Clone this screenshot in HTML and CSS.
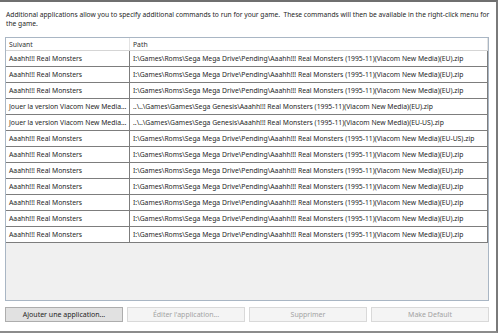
FILE: index.html
```html
<!DOCTYPE html>
<html lang="fr">
  <head>
    <meta charset="UTF-8" />
    <title>Additional Applications</title>
    <link rel="stylesheet" href="styles.css">
  </head>
  <body>
    <div class="window">
      <p class="intro">Additional applications allow you to specify additional commands to run for your game.&nbsp; These commands will then be available in the right-click menu for the game.</p>

      <div class="grid">
        <table class="apps">
          <thead>
            <tr>
              <th class="col-name">Suivant</th>
              <th>Path</th>
            </tr>
          </thead>
          <tbody>
            <tr><td>Aaahh!!! Real Monsters</td><td>I:\Games\Roms\Sega Mega Drive\Pending\Aaahh!!! Real Monsters (1995-11)(Viacom New Media)(EU).zip</td></tr>
            <tr><td>Aaahh!!! Real Monsters</td><td>I:\Games\Roms\Sega Mega Drive\Pending\Aaahh!!! Real Monsters (1995-11)(Viacom New Media)(EU).zip</td></tr>
            <tr><td>Aaahh!!! Real Monsters</td><td>I:\Games\Roms\Sega Mega Drive\Pending\Aaahh!!! Real Monsters (1995-11)(Viacom New Media)(EU).zip</td></tr>
            <tr><td>Jouer la version Viacom New Media...</td><td>..\..\Games\Games\Sega Genesis\Aaahh!!! Real Monsters (1995-11)(Viacom New Media)(EU).zip</td></tr>
            <tr><td>Jouer la version Viacom New Media...</td><td>..\..\Games\Games\Sega Genesis\Aaahh!!! Real Monsters (1995-11)(Viacom New Media)(EU-US).zip</td></tr>
            <tr><td>Aaahh!!! Real Monsters</td><td>I:\Games\Roms\Sega Mega Drive\Pending\Aaahh!!! Real Monsters (1995-11)(Viacom New Media)(EU-US).zip</td></tr>
            <tr><td>Aaahh!!! Real Monsters</td><td>I:\Games\Roms\Sega Mega Drive\Pending\Aaahh!!! Real Monsters (1995-11)(Viacom New Media)(EU).zip</td></tr>
            <tr><td>Aaahh!!! Real Monsters</td><td>I:\Games\Roms\Sega Mega Drive\Pending\Aaahh!!! Real Monsters (1995-11)(Viacom New Media)(EU).zip</td></tr>
            <tr><td>Aaahh!!! Real Monsters</td><td>I:\Games\Roms\Sega Mega Drive\Pending\Aaahh!!! Real Monsters (1995-11)(Viacom New Media)(EU).zip</td></tr>
            <tr><td>Aaahh!!! Real Monsters</td><td>I:\Games\Roms\Sega Mega Drive\Pending\Aaahh!!! Real Monsters (1995-11)(Viacom New Media)(EU).zip</td></tr>
            <tr><td>Aaahh!!! Real Monsters</td><td>I:\Games\Roms\Sega Mega Drive\Pending\Aaahh!!! Real Monsters (1995-11)(Viacom New Media)(EU).zip</td></tr>
            <tr><td>Aaahh!!! Real Monsters</td><td>I:\Games\Roms\Sega Mega Drive\Pending\Aaahh!!! Real Monsters (1995-11)(Viacom New Media)(EU).zip</td></tr>
          </tbody>
        </table>
      </div>

      <div class="actions">
        <button class="btn">Ajouter une application...</button>
        <button class="btn" disabled>Éditer l'application...</button>
        <button class="btn" disabled>Supprimer</button>
        <button class="btn" disabled>Make Default</button>
      </div>
    </div>
  </body>
</html>
```

FILE: styles.css
```css
body {
  margin: 0;
  background: #ffffff;
  font-family: "Noto Sans", "Open Sans", sans-serif;
  color: #1e1e1e;
}

.window {
  width: 498px;
  height: 333px;
  box-sizing: border-box;
  border-top: 2px solid #6f6f6f;
  border-right: 2px solid #7a7a7a;
  border-bottom: 2px solid #8c8c8c;
  padding: 8px 7px 0 5px;
  display: flex;
  flex-direction: column;
}

.intro {
  margin: 0 -2px 0 1px;
  font-size: 6.7px;
  line-height: 9px;
  color: #262626;
}

.grid {
  margin-top: 9px;
  height: 264px;
  box-sizing: border-box;
  border: 1px solid #a9b6c4;
  background: #f0f0f0;
}

.apps {
  width: 100%;
  border-collapse: collapse;
  font-size: 6.8px;
  table-layout: fixed;
}

.apps th {
  height: 12px;
  padding: 0 3px;
  text-align: left;
  font-weight: normal;
  color: #333;
  background: #ffffff;
  border-right: 1px solid #e3e3e3;
  border-bottom: 1px solid #d5d5d5;
}

.apps .col-name {
  width: 117px;
}

.apps td {
  height: 15px;
  padding: 0 3px;
  background: #ffffff;
  border: 1px solid #7d7d7d;
  white-space: nowrap;
  overflow: hidden;
}

.apps tr td:first-child {
  border-left: none;
}

.actions {
  margin-top: 6px;
  display: grid;
  grid-template-columns: repeat(4, 1fr);
  gap: 4px;
}

.btn {
  height: 15px;
  padding: 0;
  font-family: inherit;
  font-size: 7px;
  color: #1e1e1e;
  background: #e1e1e1;
  border: 1px solid #adadad;
}

.btn:disabled {
  color: #a3a3a3;
  background: #f4f4f4;
  border-color: #d9d9d9;
}
```
